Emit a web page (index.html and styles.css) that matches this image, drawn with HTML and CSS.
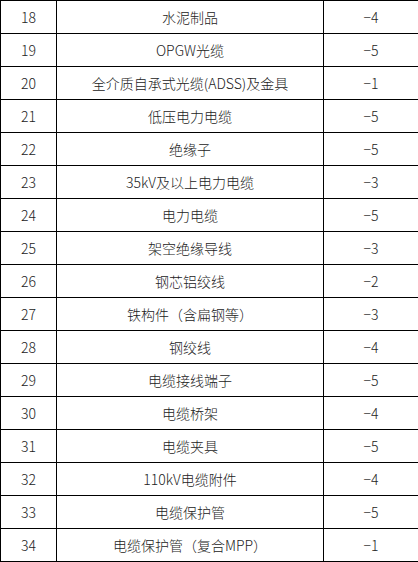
FILE: index.html
```html
<!DOCTYPE html>
<html lang="zh-CN">
<head>
<meta charset="utf-8">
<link rel="stylesheet" href="styles.css">
<title>表</title>
</head>
<body>
<table class="grid">
<colgroup><col class="c-no"><col class="c-name"><col class="c-val"></colgroup>
<tbody>
<tr><td>18</td><td>水泥制品</td><td>−4</td></tr>
<tr><td>19</td><td>OPGW光缆</td><td>−5</td></tr>
<tr><td>20</td><td>全介质自承式光缆(ADSS)及金具</td><td>−1</td></tr>
<tr><td>21</td><td>低压电力电缆</td><td>−5</td></tr>
<tr><td>22</td><td>绝缘子</td><td>−5</td></tr>
<tr><td>23</td><td>35kV及以上电力电缆</td><td>−3</td></tr>
<tr><td>24</td><td>电力电缆</td><td>−5</td></tr>
<tr><td>25</td><td>架空绝缘导线</td><td>−3</td></tr>
<tr><td>26</td><td>钢芯铝绞线</td><td>−2</td></tr>
<tr><td>27</td><td>铁构件（含扁钢等）</td><td>−3</td></tr>
<tr><td>28</td><td>钢绞线</td><td>−4</td></tr>
<tr><td>29</td><td>电缆接线端子</td><td>−5</td></tr>
<tr><td>30</td><td>电缆桥架</td><td>−4</td></tr>
<tr><td>31</td><td>电缆夹具</td><td>−5</td></tr>
<tr><td>32</td><td>110kV电缆附件</td><td>−4</td></tr>
<tr><td>33</td><td>电缆保护管</td><td>−5</td></tr>
<tr><td>34</td><td>电缆保护管（复合MPP）</td><td>−1</td></tr>
</tbody>
</table>
</body>
</html>
```
FILE: styles.css
```css
html, body {
  margin: 0;
  padding: 0;
  background: #fff;
}
.grid {
  width: 418px;
  table-layout: fixed;
  border-collapse: collapse;
  font-family: "Noto Sans CJK SC", "Liberation Sans", sans-serif;
  font-size: 14px;
  font-weight: 300;
  color: #222;
}
.c-no { width: 56px; }
.c-name { width: 267px; }
.c-val { width: 95px; }
.grid td {
  border: 1px solid #000;
  height: 32px;
  padding: 0;
  text-align: center;
  vertical-align: middle;
  line-height: 20px;
  white-space: nowrap;
}
```
